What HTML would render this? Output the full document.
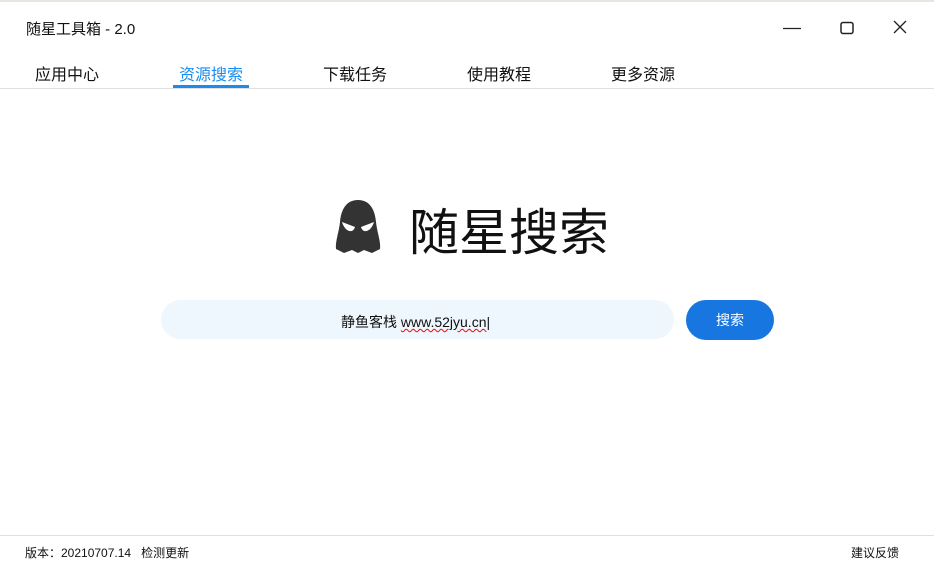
<!DOCTYPE html>
<html><head><meta charset="utf-8"><style>
body{margin:0;width:934px;height:566px;background:#fff;font-family:"Liberation Sans","Noto Sans CJK SC",sans-serif;position:relative;overflow:hidden;color:#111}
.a{position:absolute;white-space:nowrap}
</style></head><body>
<div class="a" style="left:0;top:0;width:934px;height:2px;background:#e8e4e0"></div>
<div class="a" style="left:26px;top:18px;font-size:15px">随星工具箱 - 2.0</div>
<svg class="a" style="left:780px;top:18px" width="150" height="20"><path d="M3 10.5H21" stroke="#222" stroke-width="1.2"/><rect x="61" y="4.5" width="12" height="11" rx="2" fill="none" stroke="#222" stroke-width="1.5"/><path d="M114 3L126 15M126 3L114 15" stroke="#222" stroke-width="1.3"/></svg>
<div class="a" style="left:35px;top:61px;font-size:16px">应用中心</div>
<div class="a" style="left:179px;top:61px;font-size:16px;color:#1a8cef">资源搜索</div>
<div class="a" style="left:173px;top:85px;width:76px;height:3px;background:#1a8cef"></div>
<div class="a" style="left:323px;top:61px;font-size:16px">下载任务</div>
<div class="a" style="left:467px;top:61px;font-size:16px">使用教程</div>
<div class="a" style="left:611px;top:61px;font-size:16px">更多资源</div>
<div class="a" style="left:0;top:88px;width:934px;height:1px;background:#e0e0e0"></div>
<svg class="a" style="left:334px;top:198px" width="48" height="56" viewBox="0 0 48 56"><path d="M24 2C12 2 7 12 6 24C5 34 1 44 2 51L10 55L18 52L24 55L30 52L38 55L46 51C47 44 43 34 42 24C41 12 36 2 24 2Z" fill="#333"/><path d="M8 24L21 29C19 36 11 34 8 24Z M40 24L27 29C29 36 37 34 40 24Z" fill="#fff"/></svg>
<div class="a" style="left:409px;top:193px;font-size:50px;color:#111">随星搜索</div>
<div class="a" style="left:161px;top:300px;width:513px;height:39px;border-radius:20px;background:#eef6fe"></div>
<div class="a" style="left:341px;top:312px;font-size:14px">静鱼客栈 <span style="text-decoration:underline wavy red;text-decoration-thickness:1px">www.52jyu.cn</span>|</div>
<div class="a" style="left:686px;top:300px;width:88px;height:40px;border-radius:20px;background:#1776e0;color:#fff;font-size:14px;text-align:center;line-height:40px">搜索</div>
<div class="a" style="left:0;top:535px;width:934px;height:1px;background:#e0e0e0"></div>
<div class="a" style="left:25px;top:544px;font-size:12px">版本：20210707.14 &nbsp; 检测更新</div>
<div class="a" style="left:851px;top:544px;font-size:12px">建议反馈</div>
</body></html>
